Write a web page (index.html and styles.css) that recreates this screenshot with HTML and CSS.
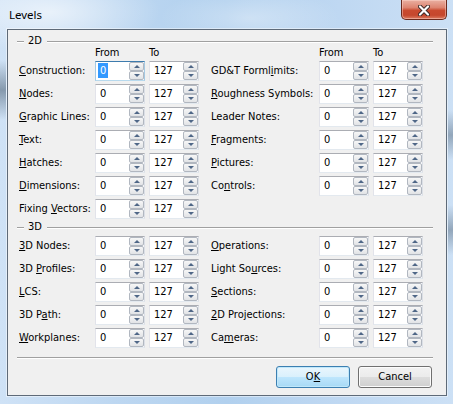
FILE: index.html
```html
<!DOCTYPE html>
<html>
<head>
<meta charset="utf-8">
<title>Levels</title>
<link rel="stylesheet" href="styles.css">
</head>
<body>
<div class="window">
  <div class="titlebar">
    <span class="title">Levels</span>
    <div class="close">
      <svg width="12" height="11" viewBox="0 0 12 11">
        <path d="M2 1.5 L10 9.5 M10 1.5 L2 9.5" stroke="#3b2a28" stroke-width="4" stroke-linecap="round" fill="none"/>
        <path d="M2 1.5 L10 9.5 M10 1.5 L2 9.5" stroke="#ffffff" stroke-width="2.2" stroke-linecap="round" fill="none"/>
      </svg>
    </div>
  </div>
  <div class="client">
    <div class="gtitle"><span class="gline short"></span><span class="gtext">2D</span><span class="gline long"></span></div>
    <div class="grid head">
      <div></div><div class="hdr">From</div><div class="hdr">To</div>
      <div></div><div class="hdr">From</div><div class="hdr">To</div>

      <div class="lbl"><u>C</u>onstruction:</div>
      <div class="spin focus"><span class="val"><span class="sel">0</span></span><span class="ud"><i class="up"></i><i class="dn"></i></span></div>
      <div class="spin"><span class="val">127</span><span class="ud"><i class="up"></i><i class="dn"></i></span></div>
      <div class="lbl r">GD&amp;T Forml<u>i</u>mits:</div>
      <div class="spin"><span class="val">0</span><span class="ud"><i class="up"></i><i class="dn"></i></span></div>
      <div class="spin"><span class="val">127</span><span class="ud"><i class="up"></i><i class="dn"></i></span></div>

      <div class="lbl"><u>N</u>odes:</div>
      <div class="spin"><span class="val">0</span><span class="ud"><i class="up"></i><i class="dn"></i></span></div>
      <div class="spin"><span class="val">127</span><span class="ud"><i class="up"></i><i class="dn"></i></span></div>
      <div class="lbl r"><u>R</u>oughness Symbols:</div>
      <div class="spin"><span class="val">0</span><span class="ud"><i class="up"></i><i class="dn"></i></span></div>
      <div class="spin"><span class="val">127</span><span class="ud"><i class="up"></i><i class="dn"></i></span></div>

      <div class="lbl"><u>G</u>raphic Lines:</div>
      <div class="spin"><span class="val">0</span><span class="ud"><i class="up"></i><i class="dn"></i></span></div>
      <div class="spin"><span class="val">127</span><span class="ud"><i class="up"></i><i class="dn"></i></span></div>
      <div class="lbl r">Leader Notes:</div>
      <div class="spin"><span class="val">0</span><span class="ud"><i class="up"></i><i class="dn"></i></span></div>
      <div class="spin"><span class="val">127</span><span class="ud"><i class="up"></i><i class="dn"></i></span></div>

      <div class="lbl"><u>T</u>ext:</div>
      <div class="spin"><span class="val">0</span><span class="ud"><i class="up"></i><i class="dn"></i></span></div>
      <div class="spin"><span class="val">127</span><span class="ud"><i class="up"></i><i class="dn"></i></span></div>
      <div class="lbl r"><u>F</u>ragments:</div>
      <div class="spin"><span class="val">0</span><span class="ud"><i class="up"></i><i class="dn"></i></span></div>
      <div class="spin"><span class="val">127</span><span class="ud"><i class="up"></i><i class="dn"></i></span></div>

      <div class="lbl"><u>H</u>atches:</div>
      <div class="spin"><span class="val">0</span><span class="ud"><i class="up"></i><i class="dn"></i></span></div>
      <div class="spin"><span class="val">127</span><span class="ud"><i class="up"></i><i class="dn"></i></span></div>
      <div class="lbl r"><u>P</u>ictures:</div>
      <div class="spin"><span class="val">0</span><span class="ud"><i class="up"></i><i class="dn"></i></span></div>
      <div class="spin"><span class="val">127</span><span class="ud"><i class="up"></i><i class="dn"></i></span></div>

      <div class="lbl"><u>D</u>imensions:</div>
      <div class="spin"><span class="val">0</span><span class="ud"><i class="up"></i><i class="dn"></i></span></div>
      <div class="spin"><span class="val">127</span><span class="ud"><i class="up"></i><i class="dn"></i></span></div>
      <div class="lbl r">Co<u>n</u>trols:</div>
      <div class="spin"><span class="val">0</span><span class="ud"><i class="up"></i><i class="dn"></i></span></div>
      <div class="spin"><span class="val">127</span><span class="ud"><i class="up"></i><i class="dn"></i></span></div>

      <div class="lbl">Fixing <u>V</u>ectors:</div>
      <div class="spin"><span class="val">0</span><span class="ud"><i class="up"></i><i class="dn"></i></span></div>
      <div class="spin"><span class="val">127</span><span class="ud"><i class="up"></i><i class="dn"></i></span></div>
    </div>

    <div class="gtitle g3"><span class="gline short"></span><span class="gtext">3D</span><span class="gline long"></span></div>
    <div class="grid body3">
      <div class="lbl"><u>3</u>D Nodes:</div>
      <div class="spin"><span class="val">0</span><span class="ud"><i class="up"></i><i class="dn"></i></span></div>
      <div class="spin"><span class="val">127</span><span class="ud"><i class="up"></i><i class="dn"></i></span></div>
      <div class="lbl r"><u>O</u>perations:</div>
      <div class="spin"><span class="val">0</span><span class="ud"><i class="up"></i><i class="dn"></i></span></div>
      <div class="spin"><span class="val">127</span><span class="ud"><i class="up"></i><i class="dn"></i></span></div>

      <div class="lbl">3D <u>P</u>rofiles:</div>
      <div class="spin"><span class="val">0</span><span class="ud"><i class="up"></i><i class="dn"></i></span></div>
      <div class="spin"><span class="val">127</span><span class="ud"><i class="up"></i><i class="dn"></i></span></div>
      <div class="lbl r">Light So<u>u</u>rces:</div>
      <div class="spin"><span class="val">0</span><span class="ud"><i class="up"></i><i class="dn"></i></span></div>
      <div class="spin"><span class="val">127</span><span class="ud"><i class="up"></i><i class="dn"></i></span></div>

      <div class="lbl"><u>L</u>CS:</div>
      <div class="spin"><span class="val">0</span><span class="ud"><i class="up"></i><i class="dn"></i></span></div>
      <div class="spin"><span class="val">127</span><span class="ud"><i class="up"></i><i class="dn"></i></span></div>
      <div class="lbl r"><u>S</u>ections:</div>
      <div class="spin"><span class="val">0</span><span class="ud"><i class="up"></i><i class="dn"></i></span></div>
      <div class="spin"><span class="val">127</span><span class="ud"><i class="up"></i><i class="dn"></i></span></div>

      <div class="lbl">3D P<u>a</u>th:</div>
      <div class="spin"><span class="val">0</span><span class="ud"><i class="up"></i><i class="dn"></i></span></div>
      <div class="spin"><span class="val">127</span><span class="ud"><i class="up"></i><i class="dn"></i></span></div>
      <div class="lbl r"><u>2</u>D Projections:</div>
      <div class="spin"><span class="val">0</span><span class="ud"><i class="up"></i><i class="dn"></i></span></div>
      <div class="spin"><span class="val">127</span><span class="ud"><i class="up"></i><i class="dn"></i></span></div>

      <div class="lbl"><u>W</u>orkplanes:</div>
      <div class="spin"><span class="val">0</span><span class="ud"><i class="up"></i><i class="dn"></i></span></div>
      <div class="spin"><span class="val">127</span><span class="ud"><i class="up"></i><i class="dn"></i></span></div>
      <div class="lbl r">Ca<u>m</u>eras:</div>
      <div class="spin"><span class="val">0</span><span class="ud"><i class="up"></i><i class="dn"></i></span></div>
      <div class="spin"><span class="val">127</span><span class="ud"><i class="up"></i><i class="dn"></i></span></div>
    </div>

    <div class="sep"></div>
    <div class="buttons">
      <div class="btn default">O<u>K</u></div>
      <div class="btn">Cancel</div>
    </div>
  </div>
</div>
</body>
</html>
```

FILE: styles.css
```css
* { box-sizing: border-box; }
html, body { margin: 0; padding: 0; }
body {
  width: 453px;
  height: 404px;
  overflow: hidden;
  font-family: "DejaVu Sans Condensed", "DejaVu Sans", sans-serif;
  font-stretch: condensed;
  font-size: 11px;
  color: #000;
}

.window {
  width: 453px;
  height: 404px;
  display: flex;
  flex-direction: column;
  padding: 0 6px 8px 7px;
  background:
    linear-gradient(to bottom, rgba(60,80,100,0) 60px, rgba(60,80,100,.5) 90px, rgba(60,80,100,0) 120px) left top / 6px 100% no-repeat,
    linear-gradient(to bottom, rgba(60,80,100,0) 110px, rgba(60,80,100,.4) 135px, rgba(60,80,100,0) 160px, rgba(60,80,100,0) 205px, rgba(60,80,100,.4) 230px, rgba(60,80,100,0) 255px) right top / 5px 100% no-repeat,
    radial-gradient(ellipse 110px 40px at 50px 12px, rgba(255,255,255,.6), rgba(255,255,255,0)),
    radial-gradient(ellipse 90px 30px at 250px 18px, rgba(255,255,255,.35), rgba(255,255,255,0)),
    linear-gradient(90deg, #cfe2f6 0%, #bdd7f1 25%, #b1d0ee 50%, #bfd8f2 75%, #cce0f5 100%);
}

.titlebar {
  flex: none;
  height: 29px;
  display: flex;
  justify-content: space-between;
  align-items: flex-start;
}
.title {
  font-family: "Noto Sans", "Liberation Sans", sans-serif;
  font-stretch: normal;
  font-size: 11.5px;
  line-height: 14px;
  padding: 8px 0 0 2px;
  color: #000;
}
.close {
  width: 46px;
  height: 20px;
  border: 1px solid #6a2a1e;
  border-top: none;
  border-radius: 0 0 5px 5px;
  background: linear-gradient(#eab0a2 0%, #dd8470 40%, #c94a2f 55%, #c5472d 80%, #dc7c62 100%);
  box-shadow: inset 0 0 0 1px rgba(255,220,210,.45);
  display: flex;
  align-items: center;
  justify-content: center;
}
.close svg { display: block; margin-top: 1px; }

.client {
  flex: 1;
  background: #f0f0f0;
  border: 1px solid #5e6a78;
  box-shadow: 0 0 0 1px rgba(255,255,255,.45);
  padding: 4px 13px 7px 9px;
  display: flex;
  flex-direction: column;
}

.gtitle {
  display: flex;
  align-items: flex-start;
  height: 13px;
  line-height: 13px;
}
.gtitle.g3 { margin-top: 1px; }
.gline {
  height: 2px;
  border-top: 1px solid #a0a0a0;
  border-bottom: 1px solid #ffffff;
  margin-top: 7px;
}
.gline.short { width: 7px; margin-right: 4px; }
.gline.long { flex: 1; margin-left: 5px; }

.grid {
  display: grid;
  grid-template-columns: 72px 50px 50px 112px 50px 50px;
  column-gap: 4px;
  row-gap: 3px;
  grid-auto-rows: 20px;
  margin-left: 2px;
}
.grid.head { grid-template-rows: 11px; }
.grid.body3 { margin-top: 3px; }

.hdr { line-height: 11px; }
.lbl { line-height: 20px; white-space: nowrap; }
.lbl.r { padding-left: 8px; }

.spin {
  display: flex;
  background: #fff;
  border: 1px solid;
  border-color: #abadb3 #dbdfe6 #e3e9ef #e2e3ea;
}
.spin.focus { border-color: #3d7bad #a4c9e3 #b7d9ed #a4c9e3; }
.val {
  flex: 1;
  padding-left: 4px;
  line-height: 18px;
  white-space: nowrap;
}
.sel {
  display: inline-block;
  background: #3399ff;
  color: #fff;
  line-height: 15px;
  margin-left: -2px;
  padding: 0 2px;
}
.ud {
  width: 15px;
  display: flex;
  flex-direction: column;
}
.ud i {
  flex: 1;
  display: flex;
  align-items: center;
  justify-content: center;
  border: 1px solid #b1b7c0;
  border-radius: 2px;
  background: linear-gradient(#f7f7f7, #e1e3e6);
}
.ud i::after {
  content: "";
  width: 0;
  height: 0;
  border-left: 3px solid transparent;
  border-right: 3px solid transparent;
}
.ud i.up::after { border-bottom: 3px solid #4f6787; }
.ud i.dn::after { border-top: 3px solid #4f6787; }

.sep {
  height: 2px;
  border-top: 1px solid #a0a0a0;
  border-bottom: 1px solid #ffffff;
  margin-top: 9px;
}

.buttons {
  display: flex;
  justify-content: flex-end;
  gap: 8px;
  margin-top: 7px;
  margin-right: 1px;
}
.btn {
  width: 74px;
  height: 22px;
  line-height: 20px;
  text-align: center;
  border: 1px solid #707070;
  border-radius: 3px;
  background: linear-gradient(#f2f2f2 0%, #ebebeb 50%, #dddddd 50%, #cfcfcf 100%);
  box-shadow: inset 0 0 0 1px #fcfcfc;
}
.btn.default {
  border-color: #3c7fb1;
  background: linear-gradient(#eaf6fd 0%, #d9f0fc 50%, #bee6fd 50%, #a7d9f5 100%);
  box-shadow: inset 0 0 0 1px #c0e8fb;
}
```
